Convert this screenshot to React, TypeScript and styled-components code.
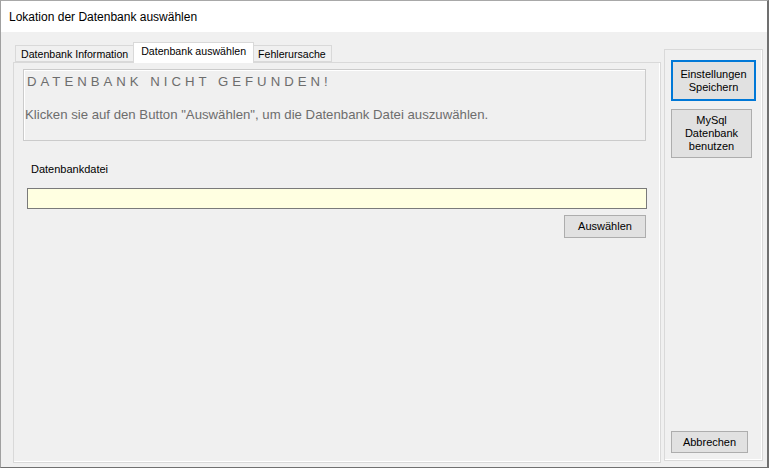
import React, { useState } from 'react';
import styled, { createGlobalStyle } from 'styled-components';

const GlobalStyle = createGlobalStyle`
  html, body {
    margin: 0;
    padding: 0;
    background: #f0f0f0;
  }
  * {
    box-sizing: border-box;
  }
`;

const Window = styled.div`
  width: 769px;
  height: 468px;
  display: flex;
  flex-direction: column;
  background: #f0f0f0;
  border-top: 1px solid #a8a8a8;
  border-left: 1px solid #a0a0a0;
  border-right: 2px solid #707070;
  border-bottom: 1px solid #707070;
  font-family: 'Liberation Sans', Arial, sans-serif;
  font-size: 11px;
  color: #000;
  overflow: hidden;
`;

const TitleBar = styled.div`
  height: 31px;
  flex: none;
  background: #fff;
  display: flex;
  align-items: center;
  padding-left: 8px;
  font-size: 12px;
  color: #000;
`;

const Body = styled.div`
  flex: 1;
  display: flex;
  gap: 3px;
  padding: 10px 0 0 12px;
`;

const TabArea = styled.div`
  width: 648px;
  display: flex;
  flex-direction: column;
`;

const TabStrip = styled.div`
  height: 20px;
  display: flex;
  align-items: flex-end;
  padding-left: 2px;
  position: relative;
  z-index: 1;
  font-size: 10.6px;
`;

const Tab = styled.div<{ $active?: boolean }>`
  height: ${p => (p.$active ? '21px' : '17px')};
  margin: ${p => (p.$active ? '0 -2px -1px -1px' : '0')};
  padding: ${p => (p.$active ? '2px 7px 0 7px' : '1px 5px 0 5px')};
  display: flex;
  align-items: ${p => (p.$active ? 'flex-start' : 'center')};
  background: ${p => (p.$active ? '#fff' : '#f0f0f0')};
  border: 1px solid #d9d9d9;
  border-bottom: ${p => (p.$active ? 'none' : '1px solid #d9d9d9')};
  white-space: nowrap;
  cursor: default;
  position: relative;
  z-index: ${p => (p.$active ? 2 : 1)};
`;

const TabPage = styled.div`
  height: 401px;
  border: 1px solid #d9d9d9;
  box-shadow: inset -1px -1px 0 #fff;
  background: #f0f0f0;
  padding: 6px 14px 0 9px;
  display: flex;
  flex-direction: column;
`;

const MessageBox = styled.div`
  height: 72px;
  border: 1px solid #cbcbcb;
  box-shadow: inset 1px 1px 0 #fff;
  padding: 4px 0 0 1px;
  color: #6d6d6d;
  font-size: 13.2px;
`;

const MessageTitle = styled.div`
  letter-spacing: 4px;
  line-height: 15px;
  padding-left: 2px;
`;

const MessageText = styled.div`
  margin-top: 18px;
  line-height: 15px;
`;

const FieldLabel = styled.div`
  margin: 22px 0 0 8px;
  line-height: 13px;
`;

const PathInput = styled.input`
  margin: 12px 0 0 4px;
  width: 620px;
  height: 21px;
  background: #ffffe1;
  border: 1px solid #7a7a7a;
  outline: none;
  font-family: inherit;
  font-size: 11px;
  padding: 0 3px;
`;

const ButtonRow = styled.div`
  display: flex;
  justify-content: flex-end;
  margin-top: 6px;
`;

const Button = styled.button<{ $w: number; $h: number; $focused?: boolean }>`
  width: ${p => p.$w}px;
  height: ${p => p.$h}px;
  background: #e1e1e1;
  border: ${p => (p.$focused ? '2px solid #0078d7' : '1px solid #adadad')};
  font-family: 'Liberation Sans', Arial, sans-serif;
  font-size: 11px;
  color: #000;
  line-height: 13px;
  padding: 0 2px;
  text-align: center;
  cursor: default;
`;

const SidePanel = styled.div`
  margin-top: 7px;
  width: 99px;
  height: 412px;
  border: 1px solid #d9d9d9;
  box-shadow: inset -1px -1px 0 #fff;
  display: flex;
  flex-direction: column;
  align-items: flex-start;
  gap: 8px;
  padding: 10px 0 7px 6px;
`;

const Spacer = styled.div`
  flex: 1;
`;

export default function App() {
  const [tab, setTab] = useState(1);
  const tabs = ['Datenbank Information', 'Datenbank auswählen', 'Fehlerursache'];

  return (
    <>
      <GlobalStyle />
      <Window>
        <TitleBar>Lokation der Datenbank auswählen</TitleBar>
        <Body>
          <TabArea>
            <TabStrip>
              {tabs.map((t, i) => (
                <Tab key={t} $active={i === tab} onClick={() => setTab(i)}>
                  {t}
                </Tab>
              ))}
            </TabStrip>
            <TabPage>
              <MessageBox>
                <MessageTitle>DATENBANK NICHT GEFUNDEN!</MessageTitle>
                <MessageText>
                  Klicken sie auf den Button "Auswählen", um die Datenbank Datei auszuwählen.
                </MessageText>
              </MessageBox>
              <FieldLabel>Datenbankdatei</FieldLabel>
              <PathInput readOnly value="" />
              <ButtonRow>
                <Button $w={82} $h={23}>Auswählen</Button>
              </ButtonRow>
            </TabPage>
          </TabArea>
          <SidePanel>
            <Button $w={85} $h={41} $focused>
              Einstellungen Speichern
            </Button>
            <Button $w={81} $h={49}>
              MySql Datenbank benutzen
            </Button>
            <Spacer />
            <Button $w={77} $h={22}>Abbrechen</Button>
          </SidePanel>
        </Body>
      </Window>
    </>
  );
}
